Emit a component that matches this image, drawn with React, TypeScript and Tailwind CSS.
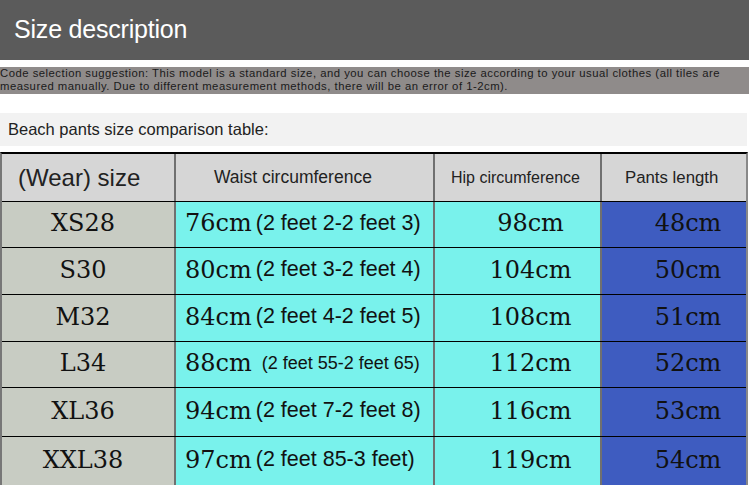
const rows = [
  { size: 'XS28', waist: '76cm', note: '(2 feet 2-2 feet 3)', hip: '98cm', len: '48cm', h: 'h-[46px]' },
  { size: 'S30', waist: '80cm', note: '(2 feet 3-2 feet 4)', hip: '104cm', len: '50cm', h: 'h-[47px]' },
  { size: 'M32', waist: '84cm', note: '(2 feet 4-2 feet 5)', hip: '108cm', len: '51cm', h: 'h-[47px]' },
  { size: 'L34', waist: '88cm', note: '(2 feet 55-2 feet 65)', hip: '112cm', len: '52cm', h: 'h-[46px]', small: true },
  { size: 'XL36', waist: '94cm', note: '(2 feet 7-2 feet 8)', hip: '116cm', len: '53cm', h: 'h-[49px]' },
  { size: 'XXL38', waist: '97cm', note: '(2 feet 85-3 feet)', hip: '119cm', len: '54cm', h: 'h-[49px]' },
];

const serif = "font-['DejaVu_Serif',serif]";
const sans = "font-['Liberation_Sans',Arial,sans-serif]";

export default function App() {
  return (
    <div className={`w-[749px] h-[485px] overflow-hidden bg-white ${sans}`}>
      <div className="h-[60px] bg-[#5b5b5b] flex items-center px-[14px]">
        <h1 className="text-[25px] text-white tracking-[-0.2px]">Size description</h1>
      </div>

      <div className="mt-[7px] h-[27px] bg-[#8f8b8a] text-[#1a1a1a]">
        <p className="text-[11.3px] leading-[13px] tracking-[0.5px]">
          Code selection suggestion: This model is a standard size, and you can choose the size according to your usual clothes (all tiles are
          <br />
          measured manually. Due to different measurement methods, there will be an error of 1-2cm).
        </p>
      </div>

      <div className="mt-[19px] mr-[2px] h-[33px] bg-[#f2f2f2] flex items-center px-[8px] text-[16.5px] text-[#222]">
        Beach pants size comparison table:
      </div>

      <div className="mt-[6px] w-[748px] border-t-2 border-black border-l-2 border-l-[#777] border-r-2 border-r-[#888]">
        <div className="grid grid-cols-[172px_259px_167px_146px] h-[47px] bg-[#d6d6d6] text-[#222]">
          <div className="flex items-center pl-[16px] text-[24px]">(Wear) size</div>
          <div className="flex items-center pl-[38px] text-[17.5px] border-l-2 border-[#707070]">Waist circumference</div>
          <div className="flex items-center pl-[16px] text-[16px] border-l-2 border-[#707070]">Hip circumference</div>
          <div className="flex items-center pl-[23px] text-[16.8px] border-l-2 border-[#707070]">Pants length</div>
        </div>
        {rows.map((r) => (
          <div key={r.size} className={`grid grid-cols-[172px_259px_167px_146px] border-t border-black ${r.h}`}>
            <div className="flex items-center justify-center pr-[10px] pb-[3px] bg-[#c8ccc3] text-[24px] text-[#111]">
              <span className={serif}>{r.size}</span>
            </div>
            <div className="flex items-center pl-[9px] pb-[3px] bg-[#79f2ec] border-l-2 border-[#707070] text-[#111]">
              <span className={`${serif} text-[24px]`}>{r.waist}</span>
              <span className={r.small ? 'ml-[10px] text-[18px]' : 'ml-[4px] text-[21.5px]'}>{r.note}</span>
            </div>
            <div className="flex items-center justify-center pl-[26px] pb-[3px] bg-[#79f2ec] border-l-2 border-[#707070] text-[24px] text-[#111]">
              <span className={serif}>{r.hip}</span>
            </div>
            <div className="flex items-center justify-center pl-[28px] pb-[3px] bg-[#3e5cc0] border-l-2 border-[#707070] text-[24px] text-[#111]">
              <span className={serif}>{r.len}</span>
            </div>
          </div>
        ))}
      </div>
    </div>
  );
}
